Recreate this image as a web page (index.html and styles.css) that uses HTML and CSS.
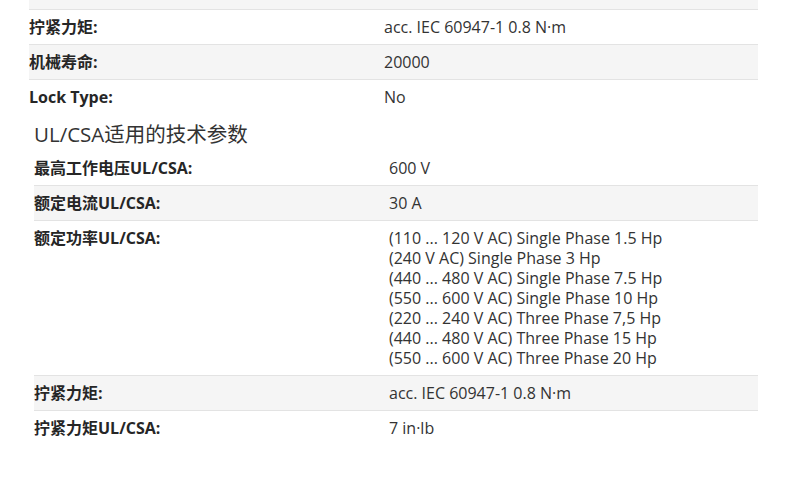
FILE: index.html
```html
<!DOCTYPE html>
<html>
<head>
  <title>技术参数</title>
  <meta charset="UTF-8">
  <link rel="stylesheet" href="styles.css">
</head>
<body>
  <div class="container">
    <!-- General specs (scrolled, previous row cut off) -->
    <div class="spec-table spec-general">
      <div class="spec-row alt cut"><div class="spec-label">&nbsp;</div><div class="spec-value">&nbsp;</div></div>
      <div class="spec-row"><div class="spec-label">拧紧力矩:</div><div class="spec-value">acc. IEC 60947-1 0.8 N·m</div></div>
      <div class="spec-row alt"><div class="spec-label">机械寿命:</div><div class="spec-value">20000</div></div>
      <div class="spec-row"><div class="spec-label">Lock Type:</div><div class="spec-value">No</div></div>
    </div>

    <!-- UL/CSA section -->
    <div class="section">
      <h3 class="section-title">UL/CSA适用的技术参数</h3>
      <div class="spec-table">
        <div class="spec-row"><div class="spec-label">最高工作电压UL/CSA:</div><div class="spec-value">600 V</div></div>
        <div class="spec-row alt"><div class="spec-label">额定电流UL/CSA:</div><div class="spec-value">30 A</div></div>
        <div class="spec-row">
          <div class="spec-label">额定功率UL/CSA:</div>
          <div class="spec-value">
            <div>(110 ... 120 V AC) Single Phase 1.5 Hp</div>
            <div>(240 V AC) Single Phase 3 Hp</div>
            <div>(440 ... 480 V AC) Single Phase 7.5 Hp</div>
            <div>(550 ... 600 V AC) Single Phase 10 Hp</div>
            <div>(220 ... 240 V AC) Three Phase 7,5 Hp</div>
            <div>(440 ... 480 V AC) Three Phase 15 Hp</div>
            <div>(550 ... 600 V AC) Three Phase 20 Hp</div>
          </div>
        </div>
        <div class="spec-row alt"><div class="spec-label">拧紧力矩:</div><div class="spec-value">acc. IEC 60947-1 0.8 N·m</div></div>
        <div class="spec-row"><div class="spec-label">拧紧力矩UL/CSA:</div><div class="spec-value">7 in·lb</div></div>
      </div>
    </div>
  </div>
</body>
</html>
```

FILE: styles.css
```css
:root {
  --text-color: #262626;
  --value-color: #333;
  --row-alt-bg: #f5f5f5;
  --border-color: #e3e3e3;
}
body {
  margin: 0;
  background: #fff;
  color: var(--text-color);
  font-family: "Open Sans", "Noto Sans CJK SC", sans-serif;
  font-size: 16px;
}
.container { padding: 0 32px 0 29px; }
.spec-general { margin-top: -25px; }
.spec-row { display: grid; grid-template-columns: 355px 1fr; border-bottom: 1px solid var(--border-color); padding: 7px 0; line-height: 20px; }
.spec-row:last-child { border-bottom: none; }
.spec-row.alt { background-color: var(--row-alt-bg); }
.spec-label { font-weight: 700; color: var(--text-color); }
.spec-value { color: var(--value-color); }
.section { padding-left: 5px; }
.section-title { margin: 0; padding: 8px 0 5px; font-size: 20.5px; line-height: 24px; font-weight: 400; color: var(--value-color); }
```
